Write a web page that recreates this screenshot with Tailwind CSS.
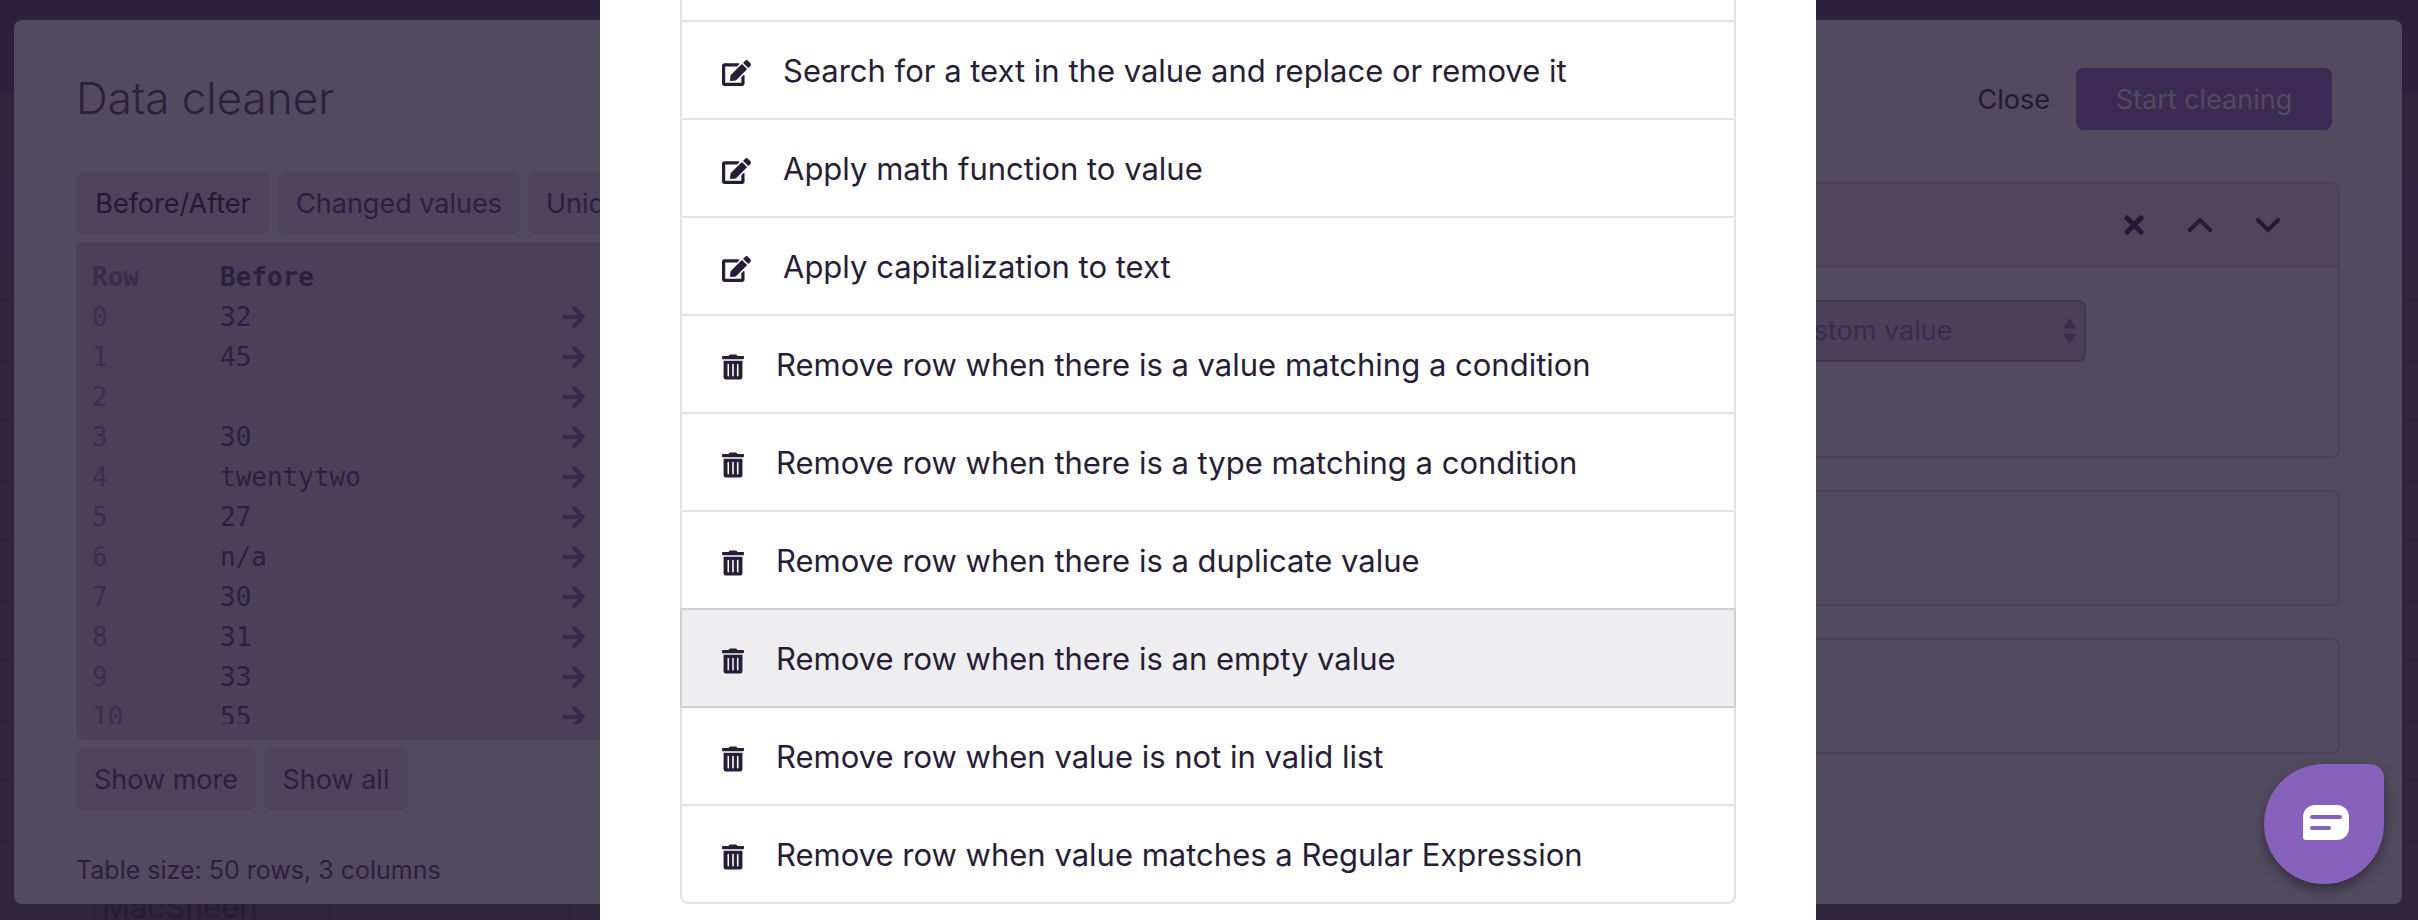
<!DOCTYPE html>
<html lang="en">
<head>
    <meta charset="UTF-8" />
    <meta name="viewport" content="width=device-width, initial-scale=1" />
    <title>Data cleaner</title>
    <script src="https://cdn.jsdelivr.net/npm/@tailwindcss/browser@4"></script>
</head>
<body class="relative min-h-screen overflow-x-hidden bg-[#2f263d] font-['Inter','Liberation_Sans',sans-serif] text-[27px] text-[#2b213c]">

    <!-- Page behind the dialogs -->
    <div class="absolute inset-0 flex flex-col overflow-hidden" aria-hidden="true">
        <div class="h-[94px] bg-[#2c213c]"></div>
        <div class="h-24"></div>
        <div class="h-[54px] bg-[#2f253f]"></div>
        <div class="h-[58px] border-b-2 border-[#2d243b]"></div>
        <div class="h-[60px] border-b-2 border-[#2d243b]"></div>
        <div class="h-[60px] border-b-2 border-[#2d243b]"></div>
        <div class="h-[60px] border-b-2 border-[#2d243b]"></div>
        <div class="h-[60px] border-b-2 border-[#2d243b]"></div>
        <div class="h-[60px] border-b-2 border-[#2d243b]"></div>
        <div class="h-[60px] border-b-2 border-[#2d243b]"></div>
        <div class="h-[60px] border-b-2 border-[#2d243b]"></div>
        <div class="h-[60px] border-b-2 border-[#2d243b]"></div>
        <div class="h-[60px] border-b-2 border-[#2d243b]"></div>
        <div class="flex flex-1 items-end pl-[92px]">
            <div class="h-[26px] w-60 border-x-2 border-[#2d243b] pl-2 text-[31px] leading-[26px] text-[#271d34]">MacSheen</div>
            <div class="h-[26px] w-60 border-r-2 border-[#2d243b]"></div>
        </div>
    </div>

    <!-- Data cleaner dialog -->
    <main class="relative flex min-h-screen flex-col pt-5 pr-4 pb-4 pl-[14px]">
        <div class="flex flex-1 flex-col rounded-lg bg-[#524a5f] px-[62px]">
            <header class="flex h-[152px] items-start justify-between pt-12 pr-2">
                <h1 class="text-[44px] leading-[60px] font-light">Data cleaner</h1>
                <div class="flex items-center">
                    <button type="button" class="h-[62px] px-[26px] pt-0.5 text-[#231934]">Close</button>
                    <button type="button" class="h-[62px] w-64 rounded-lg bg-[#3a2a54] pt-0.5 text-[#524a5f]">Start cleaning</button>
                </div>
            </header>

            <div class="grid grid-cols-2 gap-8">
                <section>
                    <div class="flex gap-2 overflow-hidden whitespace-nowrap">
                        <button type="button" class="h-[62px] w-[194px] rounded-lg bg-[#4e445b] pt-0.5 text-[#231934]">Before/After</button>
                        <button type="button" class="h-[62px] w-[242px] rounded-lg bg-[#4e445b] pt-0.5">Changed values</button>
                        <button type="button" class="h-[62px] rounded-lg bg-[#4e445b] px-[18px] pt-0.5">Unique values</button>
                    </div>

                    <div class="mt-2 rounded-lg bg-[#4a4158] px-4 pt-[15px] pb-4">
                        <div class="h-[467px] overflow-hidden">
                            <table class="w-full table-fixed font-['DejaVu_Sans_Mono','Liberation_Mono',monospace] text-[26px] leading-10">
                                <thead>
                                    <tr class="text-left">
                                        <th class="w-32 p-0 text-[#382e47]">Row</th>
                                        <th class="w-[341px] p-0">Before</th>
                                        <th class="p-0"></th>
                                    </tr>
                                </thead>
                                <tbody id="rows"></tbody>
                            </table>
                        </div>
                    </div>

                    <div class="mt-2 flex gap-2">
                        <button type="button" class="h-[62px] w-[180px] rounded-lg bg-[#4e445b] pt-0.5">Show more</button>
                        <button type="button" class="h-[62px] w-36 rounded-lg bg-[#4e445b] pt-0.5">Show all</button>
                    </div>

                    <p class="mt-10 text-[25px] leading-10">Table size: 50 rows, 3 columns</p>
                </section>

                <section class="flex flex-col gap-8 pt-[10px]">
                    <div class="h-[276px] rounded-lg border-2 border-[#4c435a]">
                        <div class="flex h-[84px] items-center justify-end gap-11 border-b-2 border-[#4c435a] bg-[#4f465c] pr-[58px] text-[#231934]">
                            <button type="button" aria-label="Remove step">
                                <svg class="h-5 w-5" viewBox="0 0 20 20" fill="none" stroke="currentColor" stroke-width="5" stroke-linecap="round"><path d="M3 3l14 14M17 3L3 17" /></svg>
                            </button>
                            <button type="button" aria-label="Move up">
                                <svg class="h-4 w-6" viewBox="0 0 24 16" fill="none" stroke="currentColor" stroke-width="4" stroke-linecap="round"><path d="M2 13L12 3l10 10" /></svg>
                            </button>
                            <button type="button" aria-label="Move down">
                                <svg class="h-4 w-6" viewBox="0 0 24 16" fill="none" stroke="currentColor" stroke-width="4" stroke-linecap="round"><path d="M2 3l10 10L22 3" /></svg>
                            </button>
                        </div>
                        <div class="flex justify-end pt-8 pr-[252px]">
                            <div class="relative">
                                <select aria-label="Value" class="h-[62px] w-[326px] appearance-none rounded-lg border-2 border-[#40364e] bg-[#4a4158] px-4 text-[#382e47]">
                                    <option>Custom value</option>
                                </select>
                                <svg class="pointer-events-none absolute top-[18px] right-[10px] h-[26px] w-[13px] text-[#382e47]" viewBox="0 0 13 26" fill="currentColor"><path d="M6.500 0L13 10.500H0zM0 15.500h13L6.500 26z" /></svg>
                            </div>
                        </div>
                    </div>
                    <div class="h-[116px] rounded-lg border-2 border-[#4c435a]"></div>
                    <div class="h-[116px] rounded-lg border-2 border-[#4c435a]"></div>
                </section>
            </div>
        </div>
    </main>

    <!-- Step picker -->
    <div class="absolute inset-0 flex justify-center pr-0.5">
        <div role="dialog" aria-label="Add step" class="w-full max-w-[1216px] bg-white px-20 text-[#271d37]">
            <ul id="steps" class="text-[31px]">
                <li class="h-[22px] border-2 border-t-0 border-[#e3e3e4]"></li>
            </ul>
        </div>
    </div>

    <button type="button" aria-label="Open chat" class="fixed right-[34px] bottom-9 flex h-30 w-30 items-center justify-center rounded-[60px] rounded-tr-[14px] bg-[#8662bd] pb-1 pl-1 shadow-[0_6px_12px_rgba(0,0,0,0.35)]">
        <svg class="h-[35px] w-[46px]" viewBox="0 0 46 35">
            <path fill="#fff" d="M12 0h22a12 12 0 0 1 12 12v11a12 12 0 0 1-12 12H3a3 3 0 0 1-3-3V12A12 12 0 0 1 12 0z" />
            <path stroke="#8662bd" stroke-width="4" stroke-linecap="round" d="M9 12h28M9 23h17" />
        </svg>
    </button>

    <script>
        const values = ['32', '45', '', '30', 'twentytwo', '27', 'n/a', '30', '31', '33', '55'];

        const arrow = '<svg class="h-[22px] w-6" viewBox="0 0 24 22" fill="none" stroke="currentColor" stroke-width="4" stroke-linecap="round"><path d="M3 11h18M13 2l9 9-9 9" /></svg>';

        document.getElementById('rows').innerHTML = values.map((value, i) => `
            <tr>
                <td class="h-10 p-0 text-[#3a3049]">${i}</td>
                <td class="h-10 p-0">${value}</td>
                <td class="h-10 p-0 text-[#362b45]">${arrow}</td>
            </tr>`).join('');

        const icons = {
            edit: '<svg class="mt-1 h-[26px] w-[29px]" viewBox="0 0 576 512" fill="currentColor"><path d="M402.6 83.2l90.2 90.2c3.8 3.8 3.8 10 0 13.8L274.4 405.6l-92.8 10.3c-12.4 1.4-22.9-9.1-21.5-21.5l10.3-92.8L388.8 83.2c3.8-3.8 10-3.8 13.8 0zm162-22.9l-48.8-48.8c-15.2-15.2-39.9-15.2-55.2 0l-35.4 35.4c-3.8 3.8-3.8 10 0 13.8l90.2 90.2c3.8 3.8 10 3.8 13.8 0l35.4-35.4c15.2-15.3 15.2-40 0-55.2zM384 346.2V448H64V128h229.8c3.2 0 6.2-1.3 8.5-3.5l40-40c7.6-7.6 2.2-20.5-8.5-20.5H48C21.5 64 0 85.5 0 112v352c0 26.5 21.5 48 48 48h352c26.500 0 48-21.5 48-48V306.2c0-10.700-12.900-16-20.500-8.500l-40 40c-2.200 2.300-3.500 5.300-3.500 8.500z" /></svg>',
            trash: '<svg class="mt-1 h-[26px] w-[22px]" viewBox="0 0 448 512" fill="currentColor"><path d="M32 464a48 48 0 0 0 48 48h288a48 48 0 0 0 48-48V128H32zm272-256a16 16 0 0 1 32 0v224a16 16 0 0 1-32 0zm-96 0a16 16 0 0 1 32 0v224a16 16 0 0 1-32 0zm-96 0a16 16 0 0 1 32 0v224a16 16 0 0 1-32 0zM432 32H312l-9.4-18.7A24 24 0 0 0 281.1 0H166.8a23.72 23.72 0 0 0-21.4 13.3L136 32H16A16 16 0 0 0 0 48v32a16 16 0 0 0 16 16h416a16 16 0 0 0 16-16V48a16 16 0 0 0-16-16z" /></svg>'
        };

        const steps = [
            ['edit', 'Search for a text in the value and replace or remove it'],
            ['edit', 'Apply math function to value'],
            ['edit', 'Apply capitalization to text'],
            ['trash', 'Remove row when there is a value matching a condition'],
            ['trash', 'Remove row when there is a type matching a condition'],
            ['trash', 'Remove row when there is a duplicate value'],
            ['trash', 'Remove row when there is an empty value'],
            ['trash', 'Remove row when value is not in valid list'],
            ['trash', 'Remove row when value matches a Regular Expression']
        ];

        const active = 6;

        steps.forEach(([icon, label], i) => {
            const li = document.createElement('li');
            li.className = '-mt-0.5 border-2 border-[#e3e3e4] last:rounded-b-lg';
            if (i === active) {
                li.className = 'relative -mt-0.5 border-2 border-[#d0d0d4] bg-[#eeeef0]';
            }
            li.innerHTML = `<button type="button" class="flex h-24 w-full items-center gap-8 px-10 pt-0.5 text-left">${icons[icon]}<span>${label}</span></button>`;
            document.getElementById('steps').appendChild(li);
        });
    </script>
</body>
</html>
